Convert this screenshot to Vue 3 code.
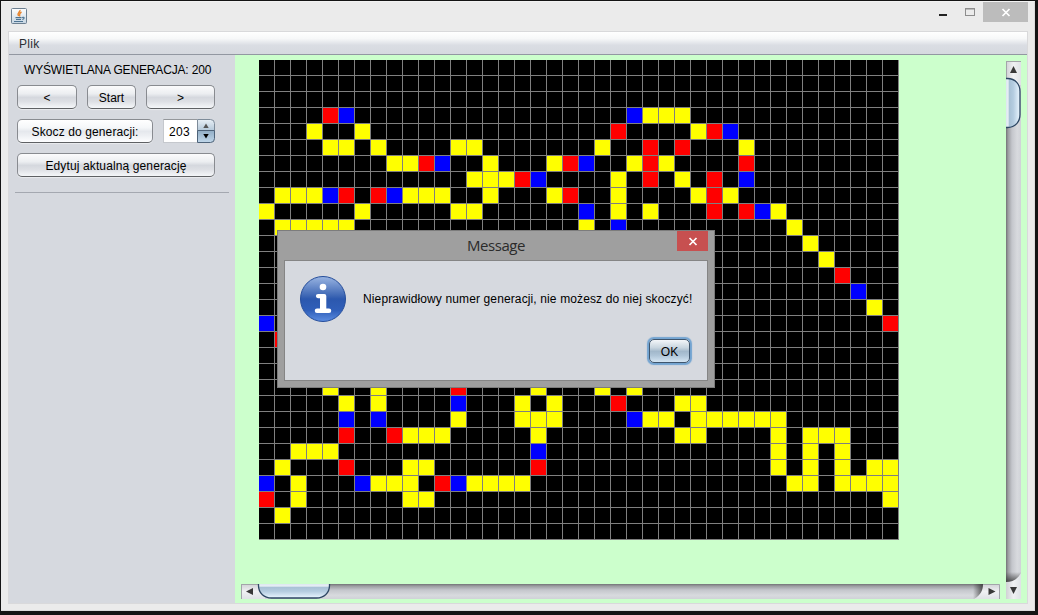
<script setup>
// Each entry lists coloured cells of a generation: [row, firstColumn, colours]
const runs = [
  [3, 4, 'rb'], [3, 23, 'byyy'],
  [4, 3, 'y'], [4, 6, 'y'], [4, 22, 'r'], [4, 27, 'yrb'],
  [5, 4, 'yy.y'], [5, 12, 'yy'], [5, 21, 'y..r.r'], [5, 30, 'y'],
  [6, 8, 'yyrb'], [6, 14, 'y'], [6, 18, 'yrb'], [6, 23, 'yry'], [6, 30, 'r'],
  [7, 13, 'yyyrb'], [7, 22, 'y.r.y.r.b'],
  [8, 1, 'yyybr.rbyyy'], [8, 14, 'y...yr..y'], [8, 27, 'yry'],
  [9, 0, 'y.....y'], [9, 12, 'yy'], [9, 20, 'b.y.y'], [9, 28, 'r.rby'],
  [10, 1, 'yyyyy'], [10, 20, 'y.b'], [10, 33, 'y'],
  [11, 34, 'y'], [12, 35, 'y'], [13, 36, 'r'], [14, 37, 'b'], [15, 38, 'y'],
  [16, 0, 'b'], [16, 39, 'r'], [17, 1, 'r'],
  [20, 4, 'y..y....r'], [20, 17, 'y...y.y'],
  [21, 5, 'y.y....b'], [21, 16, 'y.y...r...yy'],
  [22, 5, 'b.b....y'], [22, 16, 'yyy....byy.yyyyyy'],
  [23, 5, 'r..ryyy'], [23, 17, 'y........yy....y.yyy'],
  [24, 2, 'yyy'], [24, 17, 'b'], [24, 32, 'y.y.y'],
  [25, 1, 'y...r...yy'], [25, 17, 'r'], [25, 32, 'y.y.y.yy'],
  [26, 0, 'b.y...byyy.rbyyyy'], [26, 33, 'yy.yyyy'],
  [27, 0, 'r.y......yy'], [27, 39, 'y'],
  [28, 1, 'y'],
]
const cells = Array(1200).fill('')
for (const [row, col, colours] of runs) {
  ;[...colours].forEach((c, i) => {
    if (c !== '.') cells[row * 40 + col + i] = c
  })
}
</script>

<template>
  <div class="desktop">
    <div class="window">
      <header class="titlebar">
        <svg class="java" width="16" height="16" viewBox="0 0 16 16">
          <defs>
            <linearGradient id="jv" x1="0" y1="0" x2="0" y2="1">
              <stop offset="0" stop-color="#fff" /><stop offset="1" stop-color="#c5d5e2" />
            </linearGradient>
          </defs>
          <rect x=".5" y=".5" width="15" height="15" rx="1" fill="url(#jv)" stroke="#6c7f90" />
          <path d="M9 2c.5 2-3.500 2.500-1.500 6M10.500 4c-3 1.500-1.500 2.500-2 4.500" fill="none" stroke="#e8842c" stroke-width="1.400" />
          <path d="M4.500 9.700h6M5 11.500h5M3 13.500h9M11 9.500c3-1 2.500 1.500.3 2" fill="none" stroke="#4d7391" stroke-width="1.200" />
        </svg>
        <div class="controls">
          <svg width="84" height="21" viewBox="0 0 84 21">
            <rect x="39" y="0" width="45" height="20" fill="#bcbcbc" />
            <rect x="-5" y="12" width="8" height="2" fill="#222" />
            <rect x="21.500" y="6.500" width="9" height="7" fill="none" stroke="#8d8d8d" />
            <path d="M21 7h10" stroke="#8d8d8d" />
            <path d="M58.500 7l7 7M65.500 7l-7 7" stroke="#fff" stroke-width="1.700" />
          </svg>
        </div>
      </header>
      <div class="content">
        <nav class="menubar"><span>Plik</span></nav>
        <main>
          <aside>
            <p class="caption"><span>WYŚWIETLANA GENERACJA: 200</span></p>
            <div class="row nav">
              <button class="prev">&lt;</button>
              <button class="start">Start</button>
              <button class="next">&gt;</button>
            </div>
            <div class="row jump">
              <button class="skip active"><span class="t-skip">Skocz do generacji:</span></button>
              <div class="spinner">
                <span>203</span>
                <svg width="18" height="24" viewBox="0 0 18 24">
                  <defs>
                    <linearGradient id="su" x1="0" y1="0" x2="0" y2="1">
                      <stop offset="0" stop-color="#e9f0f6" /><stop offset="1" stop-color="#b4c8d9" />
                    </linearGradient>
                    <linearGradient id="sd" x1="0" y1="0" x2="0" y2="1">
                      <stop offset="0" stop-color="#91adc5" /><stop offset="1" stop-color="#c0d7ea" />
                    </linearGradient>
                  </defs>
                  <path d="M.5.5h13a4 4 0 0 1 4 4v7H.5z" fill="url(#su)" stroke="#7d8b99" />
                  <path d="M.5 11.500h17v8a4 4 0 0 1-4 4H.5z" fill="url(#sd)" stroke="#4e6379" />
                  <path d="M9 4.500l2.700 4.500H6.300z" fill="#555" />
                  <path d="M9 19.500l2.700-4.500H6.300z" fill="#000" />
                </svg>
              </div>
            </div>
            <div class="row">
              <button class="edit"><span class="t-edit">Edytuj aktualną generację</span></button>
            </div>
            <hr />
          </aside>
          <section class="viewport">
            <div class="board">
              <i v-for="(c, i) in cells" :key="i" :class="c" />
            </div>
            <svg class="vbar" width="15" height="538" viewBox="0 0 15 538">
              <defs>
                <linearGradient id="vt">
                  <stop offset="0" stop-color="#727376" /><stop offset=".14" stop-color="#9c9da1" />
                  <stop offset=".4" stop-color="#c4c6cc" /><stop offset=".75" stop-color="#d8dade" />
                  <stop offset="1" stop-color="#d0d2d8" />
                </linearGradient>
                <linearGradient id="vb">
                  <stop offset="0" stop-color="#d0d1d5" /><stop offset=".5" stop-color="#f0f1f3" />
                  <stop offset="1" stop-color="#dfe2e6" />
                </linearGradient>
                <linearGradient id="vth">
                  <stop offset="0" stop-color="#d7e3ed" /><stop offset=".2" stop-color="#e7eff5" />
                  <stop offset=".3" stop-color="#a9c2d6" /><stop offset=".55" stop-color="#b4cce0" />
                  <stop offset="1" stop-color="#eaf6ff" />
                </linearGradient>
                <linearGradient id="ve" x1="0" y1="0" x2="0" y2="1">
                  <stop offset="0" stop-color="#333" stop-opacity="0" /><stop offset="1" stop-color="#333" stop-opacity=".8" />
                </linearGradient>
              </defs>
              <rect width="15" height="538" fill="url(#vt)" />
              <rect width="15" height="24" fill="url(#vb)" />
              <path d="M0 .5h15M.5 0v18" stroke="#a3a5aa" />
              <path d="M7.500 5l3.500 7H4z" fill="#383838" />
              <path d="M-1 17.500h2.500c8 0 12.500 6 12.500 13v23c0 7-4.500 13-12.500 13h-2.500z" fill="url(#vth)" stroke="#2d4763" stroke-width="1.300" />
              <rect y="511" width="15" height="10" fill="url(#ve)" />
              <path d="M0 521c6 0 11-2 15-9v26H0z" fill="url(#vb)" />
              <path d="M7.500 533L11 526H4z" fill="#383838" />
            </svg>
            <svg class="hbar" width="759" height="15" viewBox="0 0 759 15">
              <defs>
                <linearGradient id="ht" x1="0" y1="0" x2="0" y2="1">
                  <stop offset="0" stop-color="#727376" /><stop offset=".14" stop-color="#9c9da1" />
                  <stop offset=".4" stop-color="#c4c6cc" /><stop offset=".75" stop-color="#d8dade" />
                  <stop offset="1" stop-color="#d0d2d8" />
                </linearGradient>
                <linearGradient id="hb" x1="0" y1="0" x2="0" y2="1">
                  <stop offset="0" stop-color="#d0d1d5" /><stop offset=".5" stop-color="#f0f1f3" />
                  <stop offset="1" stop-color="#dfe2e6" />
                </linearGradient>
                <linearGradient id="hth" x1="0" y1="0" x2="0" y2="1">
                  <stop offset="0" stop-color="#d7e3ed" /><stop offset=".2" stop-color="#e7eff5" />
                  <stop offset=".3" stop-color="#a9c2d6" /><stop offset=".55" stop-color="#b4cce0" />
                  <stop offset="1" stop-color="#eaf6ff" />
                </linearGradient>
                <linearGradient id="he">
                  <stop offset="0" stop-color="#333" stop-opacity="0" /><stop offset="1" stop-color="#333" stop-opacity=".8" />
                </linearGradient>
              </defs>
              <rect width="759" height="15" fill="url(#ht)" />
              <rect width="24" height="15" fill="url(#hb)" />
              <path d="M0 .5h18M.5 0v15" stroke="#a3a5aa" />
              <path d="M5 7.500l7-3.500v7z" fill="#383838" />
              <path d="M17.500-1v2.500c0 8 6 12.500 13 12.500h45c7 0 13-4.500 13-12.500v-2.500z" fill="url(#hth)" stroke="#2d4763" stroke-width="1.300" />
              <rect x="732" width="10" height="15" fill="url(#he)" />
              <path d="M742 0c0 6-2 11-9 15h26V0z" fill="url(#hb)" />
              <path d="M742 .5h16.500V15" fill="none" stroke="#a3a5aa" />
              <path d="M754.500 7.500L747.500 4v7z" fill="#383838" />
            </svg>
          </section>
        </main>
      </div>
    </div>

    <div class="dialog">
      <div class="dialog-title">
        <span>Message</span>
        <svg class="close" width="31" height="20" viewBox="0 0 31 20">
          <rect width="31" height="20" fill="#c75050" />
          <path d="M12.500 7l7 7M19.500 7l-7 7" stroke="#fff" stroke-width="1.700" />
        </svg>
      </div>
      <div class="dialog-body">
        <div class="message">
          <svg width="48" height="48" viewBox="0 0 48 48">
            <defs>
              <linearGradient id="inf" x1="0" y1="0" x2="0" y2="1">
                <stop offset="0" stop-color="#9ab5e2" /><stop offset=".42" stop-color="#3f68b5" />
                <stop offset=".5" stop-color="#2c58ae" /><stop offset=".75" stop-color="#305fb9" />
                <stop offset="1" stop-color="#5d8ee2" />
              </linearGradient>
            </defs>
            <circle cx="24" cy="24" r="22.500" fill="url(#inf)" stroke="#264e9b" />
            <circle cx="24" cy="12" r="3.300" fill="#fff" />
            <path d="M19 19h6.300a2 2 0 0 1 2 2v12.500H30a2 2 0 0 1 0 4.500H18a2 2 0 0 1 0-4.500h3V23.200h-2a2 2 0 0 1 0-4.200z" fill="#fff" />
          </svg>
          <p><span>Nieprawidłowy numer generacji, nie możesz do niej skoczyć!</span></p>
        </div>
        <div class="actions"><button class="ok">OK</button></div>
      </div>
    </div>
  </div>
</template>

<style>
html, body { margin: 0; overflow: hidden; }
</style>

<style scoped>
* { box-sizing: border-box; }
.desktop {
  position: relative;
  width: 1038px;
  height: 615px;
  padding: 1px 3px 4px 1px;
  background: #141414;
  font: 12px/16px "Liberation Sans", Arial, sans-serif;
  color: #000;
}
.window {
  height: 610px;
  padding: 0 6px 0 7px;
  background: #ebebeb;
  border: 1px solid #dcdcdc;
  border-left: 0;
  border-top-color: #f2f2f2;
}
.titlebar { display: flex; justify-content: space-between; height: 29px; padding: 6px 0 0 3px; }
.java { display: block; }
.controls { margin: -6px 0 0; }
.controls svg { display: block; overflow: visible; }
.content { height: 573px; border: 1px solid #d9d9db; width: 1020px; }
.menubar {
  height: 23px;
  padding: 4px 10px;
  border-bottom: 1px solid #9297a1;
  background: linear-gradient(#fff, #f7f8f9 30%, #dadde3 60%, #d6d9df);
  color: #2b2e33;
}
.menubar span { letter-spacing: .3px; }
main { display: flex; height: 548px; }
aside { width: 226px; padding: 7px 6px 0; background: #d6d9df; }
aside p { margin: 0 0 7px 9px; white-space: nowrap; letter-spacing: -.16px; }
.row { display: flex; margin: 0 8px 10px 2px; }
.nav { gap: 10px; }
.jump { gap: 10px; }
button {
  height: 24px;
  padding: 1px 0 0;
  border: 1px solid #888b90;
  border-bottom-color: #5f6164;
  border-radius: 5px;
  background: linear-gradient(#fbfbfc, #eceef1 35%, #d5d8de 52%, #dddfe4 70%, #f5f7f9);
  box-shadow: 0 1px 1px rgba(255, 255, 255, .5);
  font: inherit;
  color: inherit;
  white-space: nowrap;
}
.prev { width: 60px; }
.start { width: 49px; }
.next { width: 69px; }
.skip { width: 136px; }
.edit { width: 198px; }
.t-skip { letter-spacing: .11px; }
.t-edit { letter-spacing: .12px; }
.active { background: linear-gradient(#fff, #f5f7f9 35%, #e5e8ed 52%, #edeff3 70%, #fdfeff); }
.spinner { display: flex; width: 52px; height: 24px; }
.spinner span {
  width: 34px;
  padding: 4px 0 0 5px;
  background: #fff;
  border: 1px solid #c5c8cd;
  border-top-color: #94979b;
  border-right: 0;
  line-height: 16px;
  letter-spacing: .3px;
}
hr { height: 1px; margin: 15px 0 0; border: 0; background: #a4a8b0; }
.viewport {
  display: grid;
  grid-template-columns: 18px 741px 6px 15px;
  grid-template-rows: 524px 15px;
  width: 792px;
  padding: 5px 0 0 6px;
  background: #cfc;
}
.board {
  grid-column: 2;
  grid-row: 1;
  display: grid;
  grid-template-columns: repeat(40, 16px);
  grid-template-rows: repeat(30, 16px);
}
.board i { background: #000; border: solid #808080; border-width: 0 1px 1px 0; }
.board .y { background: #ff0; }
.board .r { background: #f00; }
.board .b { background: #00f; }
.vbar { grid-column: 4; grid-row: 1 / 3; margin-top: 1px; }
.hbar { grid-column: 1 / 3; grid-row: 2; }
.dialog {
  position: absolute;
  left: 277px;
  top: 230px;
  width: 438px;
  height: 158px;
  padding: 0 6px 6px;
  background: #9f9f9f;
  border: 1px solid #7c7c7c;
}
.dialog-title { display: flex; justify-content: center; height: 29px; position: relative; }
.dialog-title span { margin-top: 4px; font: 15px/21px "Open Sans", "Noto Sans", sans-serif; letter-spacing: -.45px; color: #2b2b2b; }
.close { position: absolute; right: 0; top: 0; }
.dialog-body { height: 121px; padding: 14px 17px 0 14px; border: 1px solid #858585; background: #d6d9df; }
.message { display: flex; gap: 16px; height: 64px; }
.message svg { flex: none; }
.message p { margin: 16px 0 0; white-space: nowrap; letter-spacing: .125px; }
.actions { display: flex; justify-content: flex-end; }
.ok {
  width: 41px;
  height: 24px;
  border-color: #3e556d;
  background: linear-gradient(#f3f6f9, #c8d5df 35%, #a2b8cb 52%, #aec4d7 70%, #d4e5f3);
  box-shadow: 0 0 1px 1.500px #73a4d1;
}
</style>
